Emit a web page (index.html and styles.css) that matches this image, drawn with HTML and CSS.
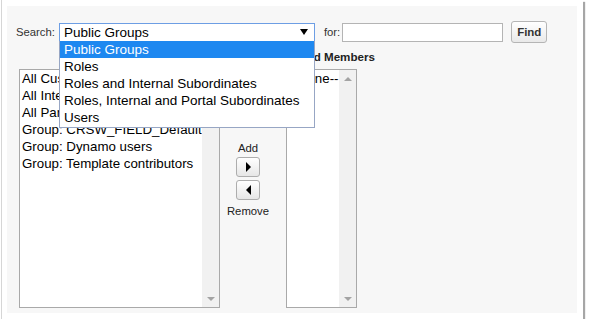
FILE: index.html
```html
<!DOCTYPE html>
<html>

<head>
    <title>Add Members</title>
    <link rel="stylesheet" href="styles.css">
</head>

<body>
    <div class="shot">
        <div class="panel">
            <div class="search-row">
                <span class="label">Search:</span>
                <div class="select">
                    <span class="select-text">Public Groups</span>
                    <span class="select-arrow"></span>
                    <div class="dropdown">
                        <div class="option selected">Public Groups</div>
                        <div class="option">Roles</div>
                        <div class="option">Roles and Internal Subordinates</div>
                        <div class="option">Roles, Internal and Portal Subordinates</div>
                        <div class="option">Users</div>
                    </div>
                </div>
                <span class="label for-label">for:</span>
                <div class="text-input"></div>
                <button class="find-btn">Find</button>
            </div>

            <div class="columns">
                <div class="col col-left">
                    <div class="col-title"><span>Available Members</span></div>
                    <div class="listbox">
                        <div class="items">
                            <div class="item">All Customer Portal Users</div>
                            <div class="item">All Internal Users</div>
                            <div class="item">All Partner Users</div>
                            <div class="item">Group: CRSW_FIELD_Default</div>
                            <div class="item">Group: Dynamo users</div>
                            <div class="item">Group: Template contributors</div>
                        </div>
                        <div class="scrollbar">
                            <span class="arrow-up"></span>
                            <span class="arrow-down"></span>
                        </div>
                    </div>
                </div>

                <div class="col col-mid">
                    <div class="mid-label">Add</div>
                    <button class="move-btn"><span class="tri-right"></span></button>
                    <button class="move-btn"><span class="tri-left"></span></button>
                    <div class="mid-label remove">Remove</div>
                </div>

                <div class="col col-right">
                    <div class="col-title"><span>Selected Members</span></div>
                    <div class="listbox">
                        <div class="items">
                            <div class="item">--None--</div>
                        </div>
                        <div class="scrollbar">
                            <span class="arrow-up"></span>
                            <span class="arrow-down"></span>
                        </div>
                    </div>
                </div>
            </div>
        </div>
    </div>
</body>

</html>
```

FILE: styles.css
```css
body {
    margin: 0;
    background-color: #fff;
    font-family: "Liberation Sans", Arial, sans-serif;
    color: #000;
}

.shot {
    margin-left: 1px;
    width: 570px;
    height: 307px;
    padding: 6px 6px 6px 5px;
    background-color: #fff;
    border-left: 1px solid #d6d6d6;
    box-shadow: 2px 2px 1px rgba(0, 0, 0, 0.35);
}

.panel {
    background-color: #f7f7f7;
    height: 100%;
    padding: 15px 0 0 9px;
    box-sizing: border-box;
}

.search-row {
    display: flex;
    align-items: center;
    height: 22px;
}

.label {
    font-size: 11.3px;
    color: #333;
    margin-right: 4px;
}

.select {
    position: relative;
    width: 256px;
    height: 19px;
    box-sizing: border-box;
    border: 1px solid #6d9ee4;
    background-color: #fff;
    display: flex;
    align-items: center;
    padding-left: 4px;
}

.select-text {
    font-size: 13.5px;
    flex: 1;
}

.select-arrow {
    width: 0;
    height: 0;
    border-left: 4px solid transparent;
    border-right: 4px solid transparent;
    border-top: 6px solid #000;
    margin-right: 6px;
}

/* open option list, drawn over the columns */
.dropdown {
    position: absolute;
    top: 100%;
    left: -1px;
    width: 256px;
    box-sizing: border-box;
    border: 1px solid #97a6c4;
    border-top: none;
    background-color: #fff;
    padding-bottom: 1px;
    z-index: 2;
}

.option {
    font-size: 13.5px;
    height: 17px;
    line-height: 17px;
    padding-left: 4px;
}

.option.selected {
    background-color: #1e88f0;
    color: #fff;
}

.for-label {
    margin-left: 9px;
    margin-right: 2px;
}

.text-input {
    width: 161px;
    height: 19px;
    box-sizing: border-box;
    border: 1px solid #b4b4b4;
    background-color: #fff;
}

.find-btn {
    margin-left: 8px;
    width: 36px;
    height: 22px;
    padding: 0;
    font-family: inherit;
    font-size: 11.5px;
    font-weight: bold;
    color: #333;
    border: 1px solid #b5b5b5;
    border-radius: 3px;
    background: linear-gradient(#fff, #e9e9e9);
}

.columns {
    display: flex;
    margin-left: 3px;
    margin-top: 7px;
}

.col-title {
    display: flex;
    justify-content: center;
    font-size: 11.6px;
    font-weight: bold;
    color: #222;
    line-height: 14px;
    height: 14px;
    margin-bottom: 5px;
    white-space: nowrap;
}

.col-left {
    width: 201px;
}

.col-right {
    width: 71px;
    margin-left: 10px;
}

.col-right .col-title span {
    margin-left: 5px;
}

.listbox {
    display: flex;
    height: 239px;
    box-sizing: border-box;
    border: 1px solid #a9a9a9;
    background-color: #fff;
}

.items {
    flex: 1;
    padding-left: 2px;
    overflow: hidden;
}

.item {
    font-size: 13.3px;
    line-height: 17px;
    white-space: nowrap;
}

.scrollbar {
    width: 17px;
    background-color: #f1f1f1;
    display: flex;
    flex-direction: column;
    justify-content: space-between;
    align-items: center;
    padding: 7px 0 6px;
}

.arrow-up {
    width: 0;
    height: 0;
    border-left: 4px solid transparent;
    border-right: 4px solid transparent;
    border-bottom: 4px solid #a3a3a3;
}

.arrow-down {
    width: 0;
    height: 0;
    border-left: 4px solid transparent;
    border-right: 4px solid transparent;
    border-top: 4px solid #a3a3a3;
}

.col-mid {
    width: 56px;
    display: flex;
    flex-direction: column;
    align-items: center;
    padding-top: 91px;
}

.mid-label {
    font-size: 11.3px;
    color: #222;
    line-height: 14px;
}

.mid-label.remove {
    margin-top: 4px;
}

.move-btn {
    width: 24px;
    height: 20px;
    margin-top: 2px;
    padding: 0;
    display: flex;
    align-items: center;
    justify-content: center;
    border: 1px solid #adadad;
    border-radius: 3px;
    background: linear-gradient(#fff, #e6e6e6);
}

.move-btn + .move-btn {
    margin-top: 3px;
}

.tri-right {
    width: 0;
    height: 0;
    border-top: 5px solid transparent;
    border-bottom: 5px solid transparent;
    border-left: 5px solid #000;
}

.tri-left {
    width: 0;
    height: 0;
    border-top: 5px solid transparent;
    border-bottom: 5px solid transparent;
    border-right: 5px solid #000;
}
```
